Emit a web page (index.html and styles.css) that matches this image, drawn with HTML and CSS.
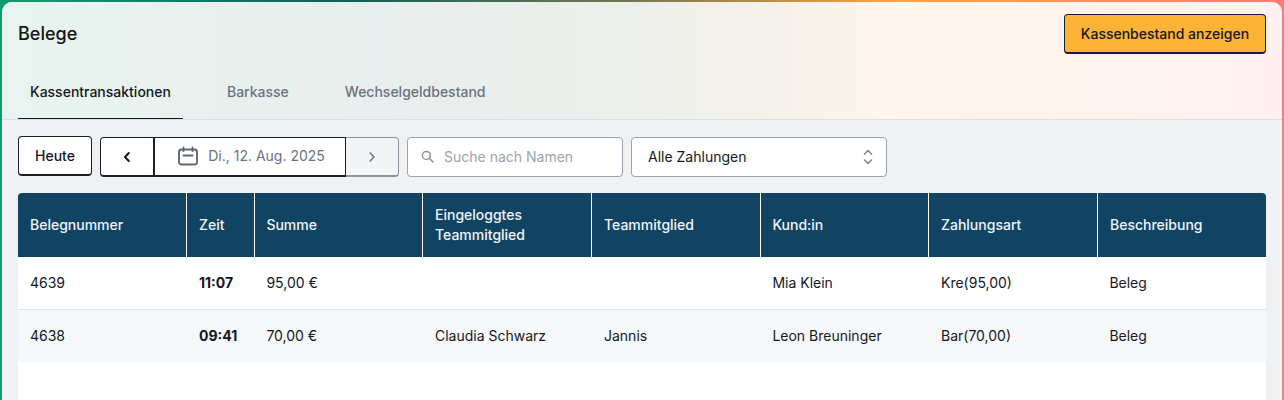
FILE: index.html
```html
<!DOCTYPE html>
<html lang="de">
<head>
<meta charset="utf-8">
<title>Belege</title>
<link rel="stylesheet" href="styles.css">
</head>
<body>
<div class="frame">
  <main class="panel">
    <header class="head">
      <div class="head-top">
        <h1 class="title">Belege</h1>
        <button class="cta">Kassenbestand anzeigen</button>
      </div>
      <nav class="tabs">
        <a class="tab active">Kassentransaktionen</a>
        <a class="tab">Barkasse</a>
        <a class="tab">Wechselgeldbestand</a>
      </nav>
    </header>
    <section class="content">
      <div class="toolbar">
        <button class="today">Heute</button>
        <div class="datepick">
          <button class="nav prev"><svg width="10" height="12" viewBox="0 0 10 12"><path d="M6.8 2 3 6l3.8 4" fill="none" stroke="#14171f" stroke-width="2" stroke-linecap="round" stroke-linejoin="round"/></svg></button>
          <div class="date">
            <svg width="20" height="20" viewBox="0 0 20 20" fill="none" stroke="#5f6675" stroke-width="1.9" stroke-linecap="round"><rect x="1" y="3.5" width="18" height="15" rx="2.5"/><path d="M5.5 1.5v3.5M14.5 1.5v3.5M5.5 9.5h9"/></svg>
            <span>Di., 12. Aug. 2025</span>
          </div>
          <button class="nav next"><svg width="10" height="12" viewBox="0 0 10 12"><path d="M3.2 2 7 6l-3.8 4" fill="none" stroke="#6b7280" stroke-width="1.6" stroke-linecap="round" stroke-linejoin="round"/></svg></button>
        </div>
        <label class="search">
          <svg width="13" height="13" viewBox="0 0 14 14" fill="none" stroke="#8b93a1" stroke-width="1.6" stroke-linecap="round"><circle cx="5.8" cy="5.8" r="4.3"/><path d="m9 9 4 4"/></svg>
          <span>Suche nach Namen</span>
        </label>
        <div class="select">
          <span>Alle Zahlungen</span>
          <svg width="10" height="16" viewBox="0 0 10 16" fill="none" stroke="#7b8391" stroke-width="1.5" stroke-linecap="round" stroke-linejoin="round"><path d="M1.5 5 5 1.5 8.5 5M1.5 11 5 14.5 8.5 11"/></svg>
        </div>
      </div>
      <div class="sheet">
        <table class="grid">
          <colgroup>
            <col class="c1"><col class="c2"><col class="c3"><col class="c4"><col class="c5"><col class="c6"><col class="c7"><col class="c8">
          </colgroup>
          <thead>
            <tr>
              <th>Belegnummer</th><th>Zeit</th><th>Summe</th><th>Eingeloggtes<br>Teammitglied</th><th>Teammitglied</th><th>Kund:in</th><th>Zahlungsart</th><th>Beschreibung</th>
            </tr>
          </thead>
          <tbody>
            <tr>
              <td>4639</td><td class="time">11:07</td><td>95,00 €</td><td></td><td></td><td>Mia Klein</td><td>Kre(95,00)</td><td>Beleg</td>
            </tr>
            <tr class="alt">
              <td>4638</td><td class="time">09:41</td><td>70,00 €</td><td>Claudia Schwarz</td><td>Jannis</td><td>Leon Breuninger</td><td>Bar(70,00)</td><td>Beleg</td>
            </tr>
          </tbody>
        </table>
      </div>
    </section>
  </main>
</div>
</body>
</html>
```
FILE: styles.css
```css
* { box-sizing: border-box; }
html, body { margin: 0; height: 100%; overflow: hidden; }
body {
  font-family: Inter, "Liberation Sans", sans-serif;
  font-size: 14px;
  color: #14171f;
}
.frame {
  height: 400px;
  padding: 2px 2px 0;
  background: linear-gradient(90deg, #159a73 0%, #125f57 27%, #7a7850 50%, #ffa544 70%, #ff7a78 100%);
}
.panel {
  height: 398px;
  border-radius: 10px 10px 0 0;
  overflow: hidden;
  background: #f0f1f3;
  display: flex;
  flex-direction: column;
}
.head {
  height: 118px;
  padding: 0 16px;
  border-bottom: 1px solid #dcdee1;
  background: linear-gradient(90deg, #e8f4f0 0%, #e8eeed 30%, #edefea 50%, #fff5eb 70%, #fff1f1 100%);
}
.head-top {
  display: flex;
  justify-content: space-between;
  align-items: flex-start;
  height: 67px;
  padding-top: 12px;
}
.title {
  margin: 0;
  font-size: 18px;
  font-weight: 500;
  line-height: 40px;
  color: #111318;
}
.cta {
  width: 202px;
  height: 40px;
  padding: 0;
  font: 500 14px/1 Inter, "Liberation Sans", sans-serif;
  color: #14171f;
  background: #fdb335;
  border: 1px solid #1b1e2a;
  border-bottom-width: 2px;
  border-radius: 4px;
}
.tabs {
  display: flex;
  gap: 32px;
}
.tab {
  padding: 0 12px 4px;
  height: 50px;
  line-height: 46px;
  font-weight: 500;
  color: #6b7280;
}
.tab.active {
  color: #14171f;
  border-bottom: 1px solid #14171f;
}
.content {
  flex: 1;
  padding: 16px 16px 0;
  display: flex;
  flex-direction: column;
  gap: 16px;
}
.toolbar {
  display: flex;
  align-items: flex-start;
  gap: 8px;
  height: 41px;
}
.today {
  width: 74px;
  height: 40px;
  padding: 0;
  font: 500 14px/1 Inter, "Liberation Sans", sans-serif;
  color: #14171f;
  background: #fff;
  border: 1px solid #1b1e2a;
  border-bottom-width: 2px;
  border-radius: 4px;
}
.datepick {
  display: flex;
  width: 299px;
  height: 40px;
  margin-top: 1px;
  border-radius: 4px;
  background: #fff;
}
.nav {
  padding: 0;
  height: 40px;
  display: flex;
  align-items: center;
  justify-content: center;
  background: #fff;
}
.prev {
  width: 55px;
  border: 1px solid #1b1e2a;
  border-right-width: 2px;
  border-bottom-width: 2px;
  border-radius: 4px 0 0 4px;
}
.next {
  width: 53px;
  border: 1px solid #8e96a6;
  border-left: 0;
  border-bottom-width: 2px;
  border-radius: 0 4px 4px 0;
  background: #f3f4f6;
}
.date {
  flex: 1;
  display: flex;
  align-items: center;
  justify-content: center;
  gap: 10px;
  padding: 0 0 2px 3px;
  border: 1px solid #1b1e2a;
  border-left: 0;
  border-bottom-width: 2px;
  color: #6b7280;
}
.search {
  width: 216px;
  height: 40px;
  margin-top: 1px;
  display: flex;
  align-items: center;
  gap: 10px;
  padding: 0 0 1px 13px;
  background: #fff;
  border: 1px solid #9aa1af;
  border-radius: 4px;
  color: #9ca3af;
}
.select {
  width: 256px;
  height: 40px;
  margin-top: 1px;
  display: flex;
  align-items: center;
  justify-content: space-between;
  padding: 0 13px 1px 16px;
  background: #fff;
  border: 1px solid #9aa1af;
  border-radius: 4px;
  color: #14171f;
}
.sheet {
  flex: 1;
  background: #fff;
  border-radius: 4px 4px 0 0;
  overflow: hidden;
}
.grid {
  width: 100%;
  border-collapse: separate;
  border-spacing: 0;
  table-layout: fixed;
}
.c1 { width: 169px; }
.c2 { width: 68px; }
.c3 { width: 168px; }
.c4 { width: 169px; }
.c5 { width: 169px; }
.c6 { width: 168px; }
.c7 { width: 169px; }
.c8 { width: 168px; }
th {
  height: 64px;
  padding: 0 12px;
  text-align: left;
  font-weight: 500;
  line-height: 20px;
  color: #f1f4f7;
  background: #114463;
  border-right: 1px solid #fff;
}
th:last-child { border-right: 0; }
td {
  height: 52px;
  padding: 0 12px 2px;
}
th:nth-child(3), td:nth-child(3), th:nth-child(6), td:nth-child(6), td:nth-child(8) { padding-left: 11.4px; }
tbody tr:first-child td {
  height: 53px;
  border-bottom: 1px solid #e2e4e8;
}
.alt td { background: #f7f8fa; }
.time { font-weight: 700; }
```
